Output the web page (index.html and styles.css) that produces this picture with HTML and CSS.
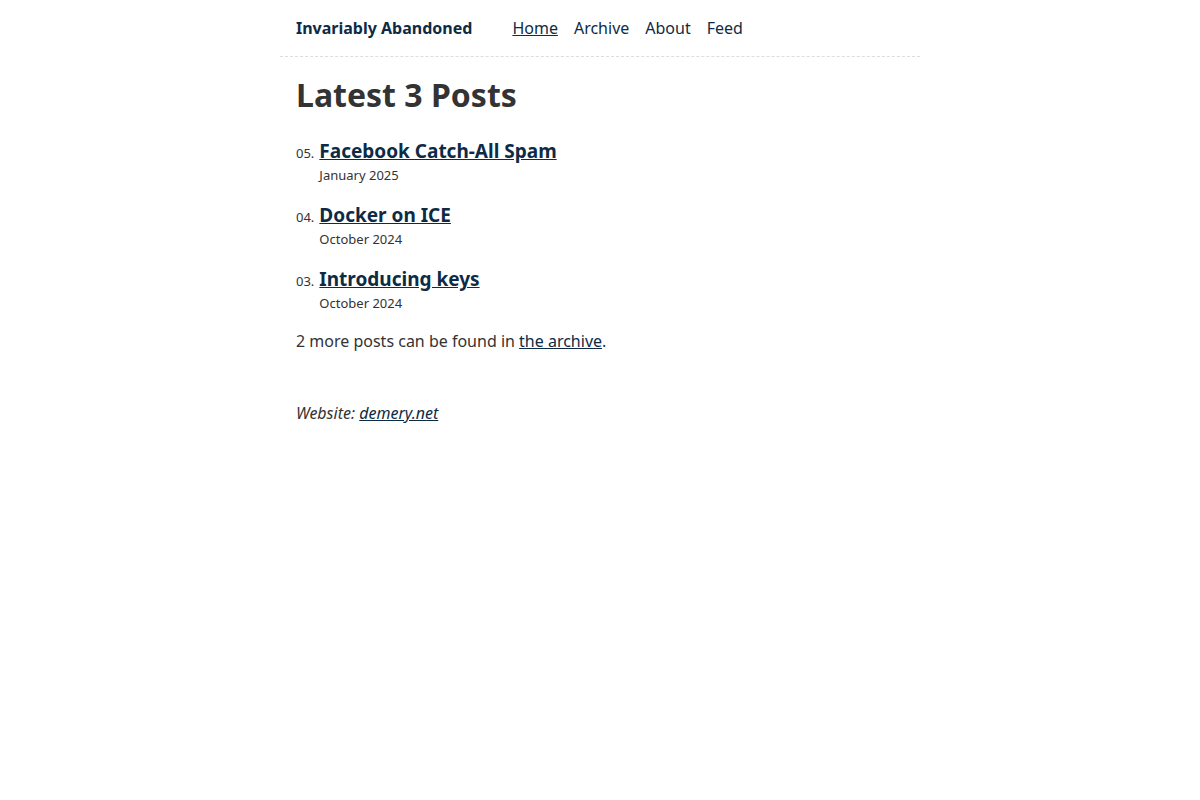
FILE: index.html
```html
<!DOCTYPE html>
<html lang="en">
<head>
    <meta charset="utf-8">
    <title>Invariably Abandoned</title>
    <link rel="stylesheet" href="styles.css">
</head>
<body>
<div class="wrap">
    <header class="site-header">
        <a class="site-title" href="#">Invariably Abandoned</a>
        <nav class="site-nav">
            <a class="current" href="#">Home</a>
            <a href="#">Archive</a>
            <a href="#">About</a>
            <a href="#">Feed</a>
        </nav>
    </header>

    <main class="content">
        <h1>Latest 3 Posts</h1>

        <ol class="posts">
            <li>
                <span class="num">05.</span>
                <div class="post">
                    <a class="post-title" href="#">Facebook Catch-All Spam</a>
                    <span class="date">January 2025</span>
                </div>
            </li>
            <li>
                <span class="num">04.</span>
                <div class="post">
                    <a class="post-title" href="#">Docker on ICE</a>
                    <span class="date">October 2024</span>
                </div>
            </li>
            <li>
                <span class="num">03.</span>
                <div class="post">
                    <a class="post-title" href="#">Introducing keys</a>
                    <span class="date">October 2024</span>
                </div>
            </li>
        </ol>

        <p>2 more posts can be found in <a href="#">the archive</a>.</p>
    </main>

    <footer class="site-footer">
        <p>Website: <a href="#">demery.net</a></p>
    </footer>
</div>
</body>
</html>
```

FILE: styles.css
```css
* {
    margin: 0;
    padding: 0;
    box-sizing: border-box;
}

body {
    font-family: "Noto Sans", "Open Sans", sans-serif;
    font-size: 16px;
    line-height: 1.5;
    color: #333;
    background: #fff;
}

a {
    color: #0d2b45;
}

.wrap {
    width: 640px;
    margin: 0 auto;
}

/* header */

.site-header {
    display: flex;
    align-items: center;
    height: 57px;
    padding: 0 16px;
    border-bottom: 1px dashed #ddd;
}

.site-title {
    font-weight: bold;
    text-decoration: none;
    margin-right: 40px;
}

.site-nav {
    display: flex;
    gap: 16px;
}

.site-nav a {
    text-decoration: none;
}

.site-nav a.current {
    text-decoration: underline;
}

/* posts */

.content {
    padding: 17px 16px 0;
}

h1 {
    font-size: 32px;
    line-height: 42px;
    font-weight: bold;
    margin-bottom: 21px;
}

.posts {
    list-style: none;
}

.posts li {
    display: flex;
    align-items: baseline;
    gap: 5px;
    margin-bottom: 16px;
}

.num {
    font-size: 13px;
}

.post {
    display: flex;
    flex-direction: column;
}

.post-title {
    font-size: 19px;
    font-weight: bold;
    line-height: 28px;
}

.date {
    font-size: 13px;
    line-height: 20px;
}

.site-footer {
    padding: 48px 16px;
    font-style: italic;
}
```
